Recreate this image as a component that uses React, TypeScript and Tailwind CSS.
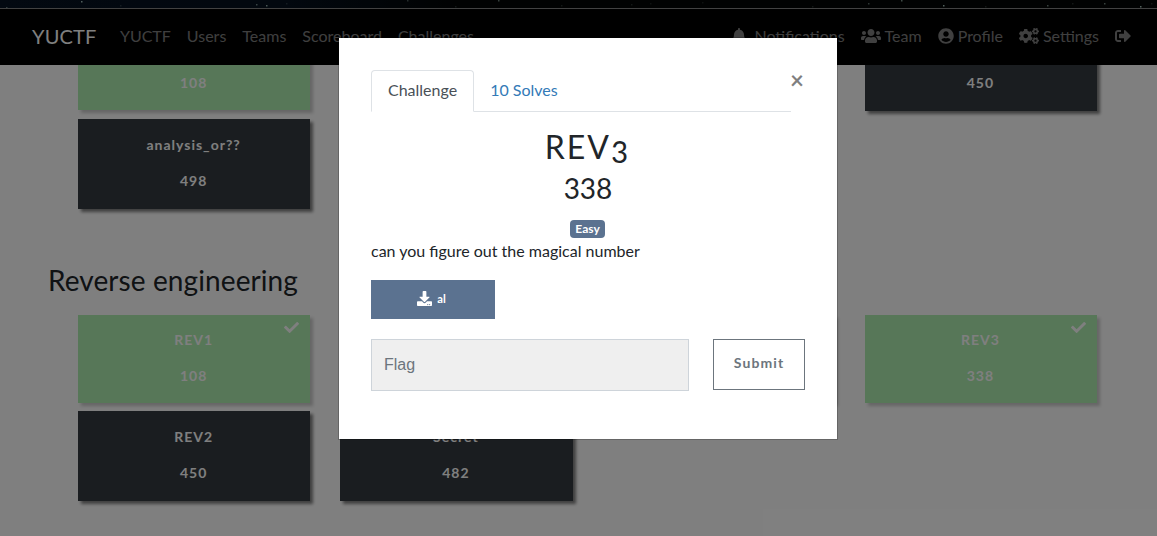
import React from "react";
import {
  FaBell,
  FaCheck,
  FaCogs,
  FaDownload,
  FaSignOutAlt,
  FaUserCircle,
  FaUsers,
} from "react-icons/fa";

type CardProps = { name?: string; value?: string; solved?: boolean };

function ChallengeCard({ name, value, solved }: CardProps) {
  const shadow = "shadow-[3px_3px_3px_#808080]";
  const text = "text-center text-sm font-bold leading-5 tracking-[1px] text-white";
  if (solved) {
    return (
      <div className={`relative h-[88px] bg-[#37d63e] pr-px pt-[15px] opacity-40 ${shadow} ${text}`}>
        <FaCheck className="absolute right-[11px] top-[5px] size-[15px]" />
        <p className="h-5">{name}</p>
        <p className="mt-4 h-5">{value}</p>
      </div>
    );
  }
  return (
    <div className={`h-[90px] bg-[#343a40] pr-px pt-4 ${shadow} ${text}`}>
      <p className="h-5">{name}</p>
      <p className="mt-4 h-5">{value}</p>
    </div>
  );
}

const STARS = [
  [6, 7, 0.5], [81, 1, 0.9], [120, 5, 0.2], [256, 4, 0.6], [266, 5, 0.8], [286, 3, 0.2],
  [407, 0, 0.4], [455, 6, 0.2], [498, 0, 0.6], [561, 5, 0.2], [631, 4, 0.2],
  [650, 3, 0.15], [702, 2, 0.15], [812, 6, 0.2], [868, 3, 0.5], [901, 0, 0.7],
  [943, 5, 0.9], [985, 6, 0.2], [1047, 5, 0.6], [1072, 3, 0.2], [1104, 3, 0.6], [1140, 6, 0.9], [1151, 3, 0.2],
];

function StarStrip() {
  return (
    <svg className="block h-2 w-full" viewBox="0 0 1157 8">
      <defs>
        <linearGradient id="sky">
          <stop offset="0" stopColor="#061222" />
          <stop offset="0.25" stopColor="#04101e" />
          <stop offset="0.4" stopColor="#020404" />
          <stop offset="1" stopColor="#030504" />
        </linearGradient>
      </defs>
      <rect width="1157" height="8" fill="url(#sky)" />
      {STARS.map(([x, y, o]) => (
        <rect key={x} x={x} y={y} width="1.5" height="1.5" fill="#b5d5cb" opacity={o} />
      ))}
    </svg>
  );
}

function Navbar() {
  return (
    <nav className="flex h-[57px] items-center border-t border-[#858585] bg-black pb-0.5 pl-8 pr-[26px] text-base text-white/50">
      <span className="mr-[23.5px] text-xl leading-[30px] tracking-[0.15px] text-white">YUCTF</span>
      <div className="flex gap-4">
        <span>YUCTF</span>
        <span>Users</span>
        <span>Teams</span>
        <span>Scoreboard</span>
        <span>Challenges</span>
      </div>
      <div className="ml-auto flex items-center gap-4">
        <span className="flex items-center gap-[7px]"><FaBell className="size-4" />Notifications</span>
        <span className="flex items-center gap-1"><FaUsers className="h-4 w-5" />Team</span>
        <span className="flex items-center gap-1"><FaUserCircle className="size-4" />Profile</span>
        <span className="flex items-center gap-1"><FaCogs className="h-4 w-5" />Settings</span>
        <FaSignOutAlt className="size-4" />
      </div>
    </nav>
  );
}

function Modal() {
  return (
    <div className="absolute left-[338px] top-[37px] h-[403px] w-[500px] border border-black/20 bg-white bg-clip-padding px-8 pt-8">
      <div className="flex">
        <div className="flex w-[420px] border-b border-[#dee2e6]">
          <span className="-mb-px h-[42px] rounded-t border border-b-white border-[#dee2e6] px-4 pt-[7px] text-base leading-6 text-[#495057]">
            Challenge
          </span>
          <span className="px-4 pt-2 text-base leading-6 text-[#337ab7]">10 Solves</span>
        </div>
        <span className="-ml-px -mt-0.5 text-2xl font-bold leading-6 text-black/50">×</span>
      </div>
      <h2 className="mt-4 pr-px text-center text-[32px] leading-[38px] tracking-[2px] text-[#212529] [font-variant-numeric:oldstyle-nums]">
        REV3
      </h2>
      <h3 className="mt-[5px] text-center text-[28px] leading-[34px] text-[#212529]">338</h3>
      <div className="mt-[15px] flex justify-center pr-px">
        <span className="h-[18px] w-[35px] rounded bg-[#5b7290] text-center text-xs font-bold leading-[18px] text-white">
          Easy
        </span>
      </div>
      <p className="mt-px text-base leading-6 text-[#212529]">can you figure out the magical number</p>
      <div className="mt-[17px] flex h-[39px] w-[124px] items-center justify-center gap-[5px] bg-[#5b7290] pr-[3px] text-white">
        <FaDownload className="mb-[3px] size-[15px]" />
        <span className="text-[11.2px] font-bold">al</span>
      </div>
      <div className="mt-5 flex items-start gap-6">
        <div className="flex h-[52px] w-[318px] items-center border border-[#ced4da] bg-[#efefef] pl-3 font-['Liberation_Sans',sans-serif] text-base text-[#6c757d]">
          Flag
        </div>
        <button className="h-[51px] w-[92px] border border-[#6c757d] pb-1 text-sm font-bold tracking-[1.1px] text-[#6c757d]">
          Submit
        </button>
      </div>
    </div>
  );
}

export default function App() {
  return (
    <div className="relative h-[536px] w-full overflow-hidden bg-white font-[Lato,sans-serif]">
      <StarStrip />
      <Navbar />
      <main className="px-12">
        <div className="ml-[15px] grid w-[1049px] grid-cols-4 grid-rows-[144px] items-end [clip-path:inset(0_-20px_-20px_-20px)]">
          <div className="flex flex-col gap-[9px] px-[15px]">
            <ChallengeCard value="108" solved />
            <ChallengeCard name="analysis_or??" value="498" />
          </div>
          <div className="col-start-4 mb-[98px] px-[15px]">
            <ChallengeCard value="450" />
          </div>
        </div>
        <h3 className="mt-[54px] text-[28px] leading-[34px] tracking-[0.1px] text-[#212529]">Reverse engineering</h3>
        <div className="ml-[15px] mt-[18px] grid w-[1049px] grid-cols-4">
          <div className="flex flex-col gap-2 px-[15px]">
            <ChallengeCard name="REV1" value="108" solved />
            <ChallengeCard name="REV2" value="450" />
          </div>
          <div className="flex flex-col justify-end px-[15px]">
            <ChallengeCard name="Secret" value="482" />
          </div>
          <div className="px-[15px]">
            <ChallengeCard solved />
          </div>
          <div className="px-[15px]">
            <ChallengeCard name="REV3" value="338" solved />
          </div>
        </div>
      </main>
      <div className="absolute inset-0 bg-black/50" />
      <Modal />
    </div>
  );
}
